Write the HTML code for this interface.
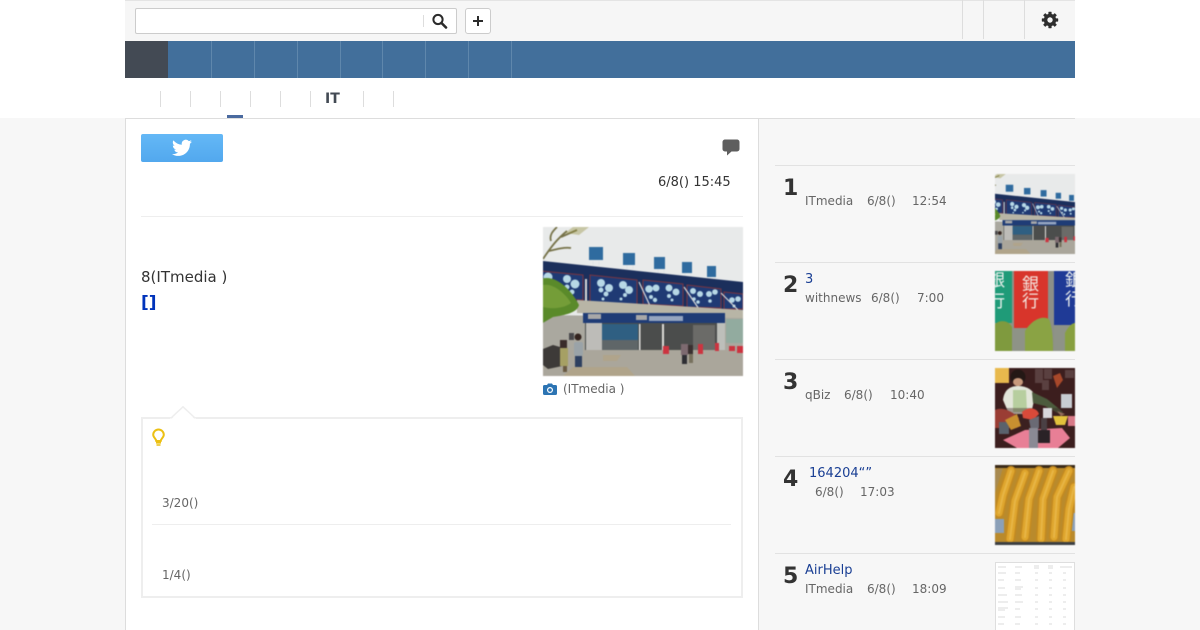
<!DOCTYPE html>
<html lang="ja">
<head>
<meta charset="utf-8">
<title>IT</title>
<style>
html,body{margin:0;padding:0}
body{width:1200px;height:630px;overflow:hidden;position:relative;background:#f7f7f7;font-family:"DejaVu Sans","Noto Sans CJK JP",sans-serif;color:#333}
.a{position:absolute;display:block;box-sizing:border-box}
.t{position:absolute;white-space:pre;line-height:1}
.meta{position:absolute;white-space:pre;line-height:1;font-size:12px;color:#666}
.lnk{position:absolute;white-space:pre;line-height:1;font-size:13px;color:#1a3f94}
.num{position:absolute;white-space:pre;line-height:1;font-size:22px;font-weight:700;color:#333}
.ph{filter:blur(.45px)}
.sep{position:absolute;top:41px;width:1px;height:37px;background:#5f87ac}
.sub{position:absolute;top:91px;width:1px;height:16px;background:#ddd}
.hr{position:absolute;left:775px;width:300px;height:1px;background:#e2e2e2}
</style>
</head>
<body>
<svg width="0" height="0" style="position:absolute">
<defs>
<g id="aq">
<rect width="200" height="149" fill="#e8eaea"/>
<g stroke="#dfe4e6" stroke-width="1"><path d="M50 38V34M56 38V34M84 42V38M90 42V38M115 46V42M121 46V42M142 50V46M148 50V46M167 52V48M172 52V48"/></g>
<g fill="#2f6b9f"><rect x="46" y="20" width="14" height="13"/><rect x="80" y="26" width="12" height="12"/><rect x="111" y="30" width="11" height="12"/><rect x="139" y="35" width="10" height="11"/><rect x="164" y="39" width="9" height="11"/></g>
<path d="M0 34L200 55V83L0 73Z" fill="#1b2f5c"/>
<g fill="#1f3a74" stroke="#7a3540" stroke-width="1"><path d="M-2 44L40 48V73L-2 71Z"/><path d="M47 48L94 53V77L47 75Z"/><path d="M100 53L140 57V79L100 77Z"/><path d="M144 58L178 62V81L144 80Z"/><path d="M181 65L200 67V82L181 82Z"/></g>
<g fill="#b7d8e6"><circle cx="5" cy="50" r="4.500"/><circle cx="24" cy="52" r="4"/><circle cx="32" cy="57" r="4.500"/><circle cx="24" cy="60" r="2.500"/><circle cx="29" cy="65" r="2.500"/><circle cx="58" cy="56" r="4"/><circle cx="66" cy="61" r="4"/><circle cx="58" cy="63" r="2.500"/><circle cx="63" cy="67" r="2.500"/><circle cx="60" cy="72" r="1.500"/><circle cx="80" cy="58" r="4"/><circle cx="86" cy="63" r="4"/><circle cx="82" cy="68" r="2"/><circle cx="78" cy="72" r="1.500"/><circle cx="106" cy="62" r="3.800"/><circle cx="113" cy="61" r="3.500"/><circle cx="108" cy="70" r="2"/><circle cx="112" cy="73" r="2.200"/><circle cx="126" cy="61" r="3.500"/><circle cx="133" cy="65" r="3.500"/><circle cx="126" cy="69" r="2"/><circle cx="129" cy="73" r="1.500"/><circle cx="150" cy="64" r="3"/><circle cx="157" cy="67" r="3"/><circle cx="151" cy="72" r="1.800"/><circle cx="155" cy="75" r="1.800"/><circle cx="166" cy="67" r="3"/><circle cx="172" cy="65" r="2.800"/><circle cx="167" cy="74" r="1.800"/><circle cx="189" cy="73" r="2.800"/><circle cx="195" cy="72" r="2.800"/><circle cx="191" cy="79" r="1.500"/></g>
<path d="M96 55L108 81M141 60L156 82M178 66L196 84" stroke="#d8d8d8" stroke-width="1.200"/>
<rect x="42" y="52" width="2" height="24" fill="#d8d8d8"/>
<path d="M34 73L200 83V92L34 86Z" fill="#b8b5a6"/>
<path d="M0 88L200 91V123H0Z" fill="#aaa89f"/>
<path d="M40 86H182V97L40 96Z" fill="#1f3c76"/>
<rect x="45" y="87" width="13" height="5" fill="#a8a8a8"/><rect x="93" y="88" width="11" height="5" fill="#a8a8a8"/>
<rect x="106" y="89" width="34" height="5" fill="#c8d2e0" opacity=".7"/>
<rect x="42" y="96" width="140" height="28" fill="#4b4d4c"/>
<rect x="43" y="96" width="16" height="29" fill="#bdbcb8"/>
<rect x="59" y="97" width="36" height="16" fill="#2f5f82"/>
<rect x="59" y="113" width="36" height="10" fill="#5f6668"/>
<rect x="96" y="97" width="1.500" height="27" fill="#e0e0dd"/>
<rect x="119" y="97" width="2" height="27" fill="#dcdcd8"/>
<rect x="150" y="98" width="22" height="25" fill="#6b6b68"/>
<rect x="174" y="96" width="8" height="29" fill="#bdbfba"/>
<rect x="183" y="92" width="17" height="24" fill="#92ab9f"/>
<rect x="0" y="123" width="200" height="26" fill="#aaa69b"/>
<path d="M20 149H92L84 140H30Z" fill="#b5a27b" opacity=".55"/>
<path d="M60 128H78L74 134H60Z" fill="#b5a27b" opacity=".5"/>
<path d="M-2 52C12 47 28 62 36 78C34 86 22 88 10 90L-2 97Z" fill="#5a8a2a"/>
<path d="M0 58C10 56 22 66 28 76C20 82 8 82 0 80Z" fill="#7fa53e" opacity=".7"/>
<path d="M0 32C8 20 14 12 24 4M6 24C14 22 22 20 28 21M8 14C6 8 10 4 14 0M18 10L34 3" stroke="#77734a" stroke-width="1.800" fill="none"/>
<path d="M22 6L30 0H46L36 8Z" fill="#95923f" opacity=".4"/>
<g><path d="M0 122L10 118L24 122V138L5 142L0 138Z" fill="#3d3a38"/><rect x="17" y="113" width="7" height="8" fill="#3a2c2a"/><rect x="17" y="121" width="8" height="18" fill="#a6a064"/><rect x="20" y="139" width="4" height="6" fill="#6a5a42"/><rect x="31" y="115" width="9" height="14" rx="2" fill="#9aa3a8"/><rect x="32" y="129" width="7" height="11" fill="#2e4060"/><circle cx="35" cy="110" r="3.500" fill="#34241f"/><rect x="26" y="106" width="5" height="7" fill="#48474a"/>
<rect x="138" y="117" width="7" height="11" fill="#7d6a70"/><rect x="139" y="128" width="5" height="9" fill="#2e2e33"/><rect x="145" y="118" width="5" height="9" fill="#3a3030"/><rect x="146" y="127" width="4" height="9" fill="#77715e"/></g>
<g fill="#cc3440"><rect x="120" y="119" width="6" height="8"/><rect x="155" y="117" width="5" height="10"/><rect x="172" y="116" width="4" height="8"/><rect x="186" y="119" width="6" height="5"/><rect x="194" y="119" width="6" height="7"/></g>
</g>
</defs>
</svg>

<div class="a" style="left:0;top:0;width:1200px;height:118px;background:#fff"></div>

<!-- header -->
<div class="a" style="left:125px;top:0;width:950px;height:41px;background:#f6f6f6;border-top:1px solid #e4e4e4"></div>
<div class="a" style="left:135px;top:8px;width:322px;height:26px;background:#fff;border:1px solid #ccc;border-radius:2px"></div>
<div class="a" style="left:423px;top:15px;width:1px;height:12px;background:#ddd"></div>
<svg class="a" style="left:431px;top:13px" width="17" height="16" viewBox="0 0 17 16"><circle cx="7" cy="6.500" r="4.600" fill="none" stroke="#2b2b2b" stroke-width="2"/><path d="M10.500 10L15 14.500" stroke="#2b2b2b" stroke-width="2.600" stroke-linecap="round"/></svg>
<div class="a" style="left:465px;top:8px;width:26px;height:26px;background:#fff;border:1px solid #ccc;border-radius:3px"></div>
<svg class="a" style="left:472px;top:15px" width="12" height="12" viewBox="0 0 12 12"><path d="M6 1V11M1 6H11" stroke="#2b2b2b" stroke-width="2"/></svg>
<div class="a" style="left:962px;top:0;width:1px;height:39px;background:#ddd"></div>
<div class="a" style="left:983px;top:0;width:1px;height:39px;background:#ddd"></div>
<div class="a" style="left:1024px;top:0;width:1px;height:39px;background:#ddd"></div>
<svg class="a" style="left:1041px;top:11px" width="18" height="18" viewBox="0 0 18 18"><g fill="#2e2e2e"><circle cx="9" cy="9" r="6.200"/><rect x="7.400" y="0.800" width="3.200" height="16.400" rx=".6"/><rect x="7.400" y="0.800" width="3.200" height="16.400" rx=".6" transform="rotate(45 9 9)"/><rect x="7.400" y="0.800" width="3.200" height="16.400" rx=".6" transform="rotate(90 9 9)"/><rect x="7.400" y="0.800" width="3.200" height="16.400" rx=".6" transform="rotate(135 9 9)"/></g><circle cx="9" cy="9" r="2.700" fill="#f6f6f6"/></svg>

<!-- nav -->
<div class="a" style="left:125px;top:41px;width:950px;height:37px;background:#426f9b"></div>
<div class="a" style="left:125px;top:41px;width:43px;height:37px;background:#434a54"></div>
<div class="sep" style="left:211px"></div>
<div class="sep" style="left:254px"></div>
<div class="sep" style="left:297px"></div>
<div class="sep" style="left:340px"></div>
<div class="sep" style="left:382px"></div>
<div class="sep" style="left:425px"></div>
<div class="sep" style="left:468px"></div>
<div class="sep" style="left:511px"></div>

<!-- sub nav -->
<div class="sub" style="left:160px"></div>
<div class="sub" style="left:190px"></div>
<div class="sub" style="left:220px"></div>
<div class="sub" style="left:250px"></div>
<div class="sub" style="left:280px"></div>
<div class="sub" style="left:310px"></div>
<div class="sub" style="left:363px"></div>
<div class="sub" style="left:393px"></div>
<div class="t" style="left:325px;top:92px;font-size:14px;font-weight:700;color:#434a54">IT</div>
<div class="a" style="left:227px;top:115px;width:16px;height:4px;background:#4a6a9f"></div>

<!-- main article -->
<div class="a" style="left:125px;top:118px;width:634px;height:512px;background:#fff;border-left:1px solid #ddd;border-right:1px solid #ddd"></div>
<div class="a" style="left:125px;top:118px;width:950px;height:1px;background:#ddd"></div>

<div class="a" style="left:141px;top:134px;width:82px;height:28px;background:linear-gradient(#64b8f6,#52a8ee);border-radius:2px"></div>
<svg class="a" style="left:172px;top:139px" width="20" height="18" viewBox="0 0 24 20"><path fill="#fff" d="M24 2.400a9.800 9.800 0 0 1-2.800.8A4.900 4.900 0 0 0 23.300.5a9.800 9.800 0 0 1-3.100 1.200A4.900 4.900 0 0 0 11.800 6.100 14 14 0 0 1 1.700.9a4.900 4.900 0 0 0 1.500 6.600 4.900 4.900 0 0 1-2.200-.6v.1a4.900 4.900 0 0 0 3.900 4.800 4.900 4.900 0 0 1-2.200.1 4.900 4.900 0 0 0 4.600 3.400A9.900 9.900 0 0 1 0 17.300 14 14 0 0 0 7.500 19.500c9.100 0 14-7.500 14-14v-.6A10 10 0 0 0 24 2.400z"/></svg>
<svg class="a" style="left:722px;top:139px" width="18" height="17" viewBox="0 0 18 17"><path fill="#5e5e5e" d="M3 .5H15A2.500 2.500 0 0 1 17.500 3V10A2.500 2.500 0 0 1 15 12.500H9.500L5 16.500V12.500H3A2.500 2.500 0 0 1 .5 10V3A2.500 2.500 0 0 1 3 .5Z"/></svg>
<div class="t" style="left:658px;top:176px;font-size:13px;color:#333">6/8() 15:45</div>
<div class="a" style="left:141px;top:216px;width:602px;height:1px;background:#eee"></div>

<div class="t" style="left:141px;top:270px;font-size:15px;color:#333">8(ITmedia )</div>
<div class="t" style="left:141px;top:295px;font-size:17px;font-weight:700;color:#0033bb">[]</div>

<svg class="a ph" style="left:543px;top:227px" width="200" height="149" viewBox="0 0 200 149"><use href="#aq"/></svg>
<svg class="a" style="left:543px;top:383px" width="14" height="12" viewBox="0 0 14 12"><path fill="#2c74b3" d="M1.500 2H4L5 .5H9L10 2H12.500A1.500 1.500 0 0 1 14 3.500V10.500A1.500 1.500 0 0 1 12.500 12H1.500A1.500 1.500 0 0 1 0 10.500V3.500A1.500 1.500 0 0 1 1.500 2Z"/><circle cx="7" cy="7" r="3" fill="#fff"/><circle cx="7" cy="7" r="1.800" fill="#2c74b3"/></svg>
<div class="t" style="left:563px;top:383px;font-size:12px;color:#666">(ITmedia )</div>

<!-- box -->
<div class="a" style="left:141px;top:417px;width:602px;height:181px;border:2px solid #eee;background:#fff"></div>
<svg class="a" style="left:170px;top:406px" width="26" height="13" viewBox="0 0 26 13"><path d="M0 12.500H2L13 1L24 12.500H26V13H0Z" fill="#fff"/><path d="M1 12L13 .8L25 12" fill="none" stroke="#eee" stroke-width="1.500"/></svg>
<svg class="a" style="left:151px;top:428px" width="15" height="19" viewBox="0 0 15 19"><path d="M7.500 1.500A5.300 5.300 0 0 0 2.200 6.800C2.200 9.500 5 10.500 5.300 13H9.700C10 10.500 12.800 9.500 12.800 6.800A5.300 5.300 0 0 0 7.500 1.500Z" fill="none" stroke="#ecc013" stroke-width="2"/><path d="M5 14.800H10M5.500 17H9.500" stroke="#ecc013" stroke-width="1.600"/></svg>
<div class="t" style="left:162px;top:497px;font-size:12px;color:#666">3/20()</div>
<div class="a" style="left:152px;top:524px;width:579px;height:1px;background:#eee"></div>
<div class="t" style="left:162px;top:569px;font-size:12px;color:#666">1/4()</div>

<!-- ranking -->
<div class="hr" style="top:165px"></div>
<div class="hr" style="top:262px"></div>
<div class="hr" style="top:359px"></div>
<div class="hr" style="top:456px"></div>
<div class="hr" style="top:553px"></div>

<div class="num" style="left:783px;top:178px">1</div>
<div class="meta" style="left:805px;top:195px">ITmedia</div>
<div class="meta" style="left:867px;top:195px">6/8()</div>
<div class="meta" style="left:912px;top:195px">12:54</div>
<svg class="a ph" style="left:995px;top:174px" width="80" height="80" viewBox="26 0 149 149"><use href="#aq"/></svg>

<div class="num" style="left:783px;top:275px">2</div>
<div class="lnk" style="left:805px;top:273px">3</div>
<div class="meta" style="left:805px;top:292px">withnews</div>
<div class="meta" style="left:871px;top:292px">6/8()</div>
<div class="meta" style="left:917px;top:292px">7:00</div>
<svg class="a ph" style="left:995px;top:271px" width="80" height="80" viewBox="0 0 80 80">
<rect width="80" height="80" fill="#8e9387"/>
<rect width="17" height="52" fill="#1f9b78"/>
<rect x="19" width="34" height="57" fill="#d8352b"/>
<rect x="53" width="6" height="80" fill="#8c8f88"/>
<rect x="59" width="21" height="54" fill="#1f3a96"/>
<g fill="#eef2ef" font-family="'Noto Sans CJK JP',sans-serif" font-size="17"><text x="27" y="19" fill="#f4e6df">銀</text><text x="27" y="36" fill="#f4e6df">行</text><text x="-7" y="15">銀</text><text x="-7" y="36">行</text><text x="70" y="15">銀</text><text x="70" y="34">行</text></g>
<path d="M0 80V53C6 48 14 50 17 56V80Z" fill="#7f9a3e"/>
<path d="M30 80V60C36 50 46 44 54 48C58 58 58 72 58 80Z" fill="#8aa344"/>
<path d="M70 80V62C74 54 78 52 80 52V80Z" fill="#88a040"/>
</svg>

<div class="num" style="left:783px;top:372px">3</div>
<div class="meta" style="left:805px;top:389px">qBiz</div>
<div class="meta" style="left:844px;top:389px">6/8()</div>
<div class="meta" style="left:890px;top:389px">10:40</div>
<svg class="a ph" style="left:995px;top:368px" width="80" height="80" viewBox="0 0 80 80">
<rect width="80" height="80" fill="#3c1e1e"/>
<rect width="14" height="15" fill="#e8b94d"/>
<g fill="#5a4040"><rect x="40" y="1" width="8" height="14"/><rect x="49" y="1" width="8" height="10"/><rect x="47" y="12" width="7" height="10"/><rect x="70" y="2" width="9" height="8"/></g>
<path d="M58 8L65 5L68 12L62 20Z" fill="#a8482a"/>
<circle cx="23" cy="9" r="7.500" fill="#241815"/>
<ellipse cx="23" cy="14" rx="5" ry="4" fill="#c8997c"/>
<path d="M8 32C9 22 15 18 23 18C32 18 38 22 40 28L36 46H14Z" fill="#e3e6da"/>
<path d="M18 22H31L32 44H18Z" fill="#b7ce9f"/>
<path d="M37 24L52 31L68 44L66 47L50 38L38 35Z" fill="#4c5b3d"/>
<path d="M62 43L70 46L66 48Z" fill="#cf9f80"/>
<rect y="40" width="80" height="22" fill="#3a2222" opacity=".4"/>
<path d="M0 42C8 38 18 44 24 50L22 60L0 60Z" fill="#9a3d34"/>
<rect x="4" y="54" width="10" height="12" fill="#5a626c"/>
<path d="M27 44C34 38 42 40 44 46L38 52L28 50Z" fill="#d84a3a"/>
<path d="M10 52L22 46L26 58L16 62Z" fill="#c89030"/>
<path d="M8 72L30 62L67 60L75 70L63 80H22Z" fill="#e87f96"/>
<path d="M34 52L44 48V60L36 62Z" fill="#6a6a74"/>
<rect x="34" y="60" width="9" height="20" fill="#8a8a94"/>
<rect x="43" y="62" width="12" height="13" fill="#2a2226"/>
<rect x="46" y="50" width="6" height="12" fill="#4a4044"/>
<path d="M48 40H57V50H48Z" fill="#d8d8dc"/>
<path d="M58 48H73L70 57H61Z" fill="#e2c23c"/>
<rect x="66" y="26" width="11" height="14" fill="#c8ccd2"/>
<rect x="73" y="48" width="7" height="10" fill="#d87a88"/>
</svg>

<div class="num" style="left:783px;top:469px">4</div>
<div class="lnk" style="left:809px;top:467px">164204“”</div>
<div class="meta" style="left:815px;top:486px">6/8()</div>
<div class="meta" style="left:860px;top:486px">17:03</div>
<svg class="a ph" style="left:995px;top:465px" width="80" height="80" viewBox="0 0 80 80">
<rect width="80" height="80" fill="#b98a2c"/>
<rect width="80" height="3" fill="#3a2a18"/>
<path d="M0 4L8 3L0 28Z" fill="#a88a50"/>
<rect y="54" width="9" height="14" fill="#8ba0b8"/>
<rect x="73" y="48" width="7" height="18" fill="#8ba0b8"/>
<g fill="none" stroke-linecap="round">
<g stroke="#c48a20" stroke-width="10"><path d="M16 6L8 30L4 48"/><path d="M30 8L20 36L15 74"/><path d="M44 6L34 34L30 72"/><path d="M58 6L48 34L46 74"/><path d="M74 6L62 32L59 72"/><path d="M79 22L74 44L71 74"/></g>
<g stroke="#dfa62e" stroke-width="7"><path d="M16 6L8 30L4 48"/><path d="M30 8L20 36L15 74"/><path d="M44 6L34 34L30 72"/><path d="M58 6L48 34L46 74"/><path d="M74 6L62 32L59 72"/><path d="M79 22L74 44L71 74"/></g>
<g stroke="#efc35a" stroke-width="2" opacity=".55"><path d="M16 6L8 30L4 48"/><path d="M30 8L20 36L15 74"/><path d="M44 6L34 34L30 72"/><path d="M58 6L48 34L46 74"/><path d="M74 6L62 32L59 72"/><path d="M79 22L74 44L71 74"/></g>
</g>
<rect y="77" width="80" height="3" fill="#3c3f42"/>
</svg>

<div class="num" style="left:783px;top:566px">5</div>
<div class="lnk" style="left:805px;top:564px">AirHelp</div>
<div class="meta" style="left:805px;top:583px">ITmedia</div>
<div class="meta" style="left:867px;top:583px">6/8()</div>
<div class="meta" style="left:912px;top:583px">18:09</div>
<svg class="a" style="left:995px;top:562px" width="80" height="68" viewBox="0 0 80 68">
<rect x=".5" y=".5" width="79" height="68" fill="#fff" stroke="#dedede"/>
<g stroke="#cfcfcf" stroke-width=".8"><path d="M3 5H11M20 5H27M39 4H44M39 6H44M53 4H58M53 6H58M65 5H77"/><path d="M3 11H11M20 11H25M40 11H43M54 11H57M68 11H71"/><path d="M3 18H9M20 18H26M40 18H43M54 18H57M68 18H71"/><path d="M3 26H10M20 25H28M20 27H26M40 26H43M54 26H57M68 26H71"/><path d="M3 33H12M20 33H27M40 33H43M54 33H57M68 33H71"/><path d="M3 40H13M20 40H28M40 40H43M54 40H57M68 40H71"/><path d="M3 46H13M3 48H10M20 47H25M40 47H43M54 47H57M68 47H71"/><path d="M3 55H10M20 55H26M40 55H43M54 55H57M68 55H71"/><path d="M3 62H9M20 62H25M40 62H43M54 62H57M68 62H71"/></g>
</svg>
</body>
</html>
